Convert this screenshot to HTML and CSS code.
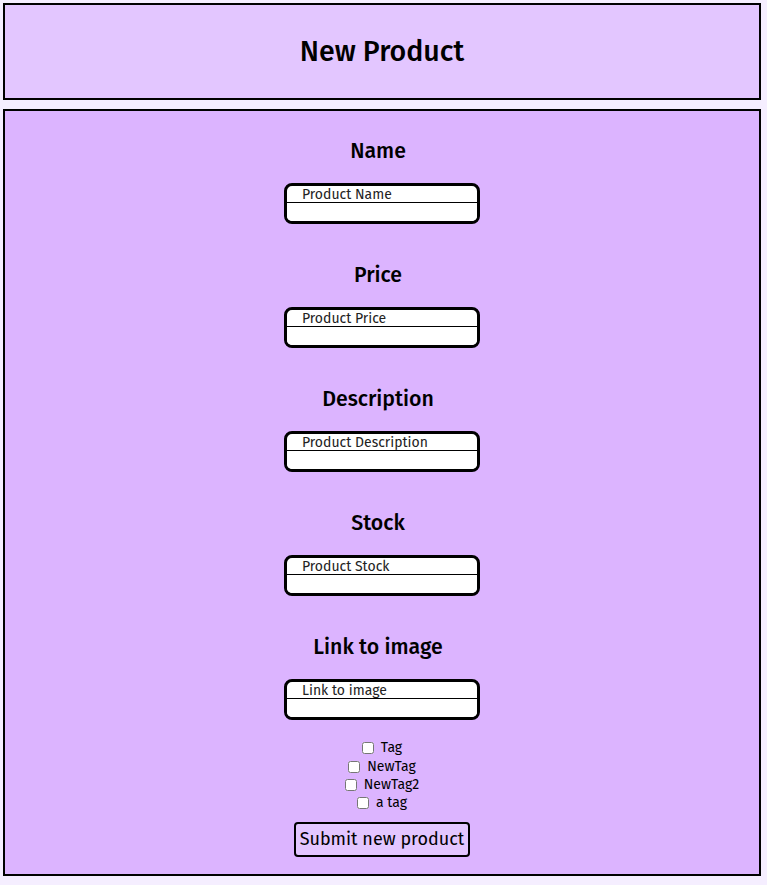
FILE: index.html
```html
<!DOCTYPE html>
<html lang="en">
<head>
<meta charset="utf-8">
<title>New Product</title>
<link rel="stylesheet" href="styles.css">
</head>
<body>
<header class="top">
  <h1 class="title">New Product</h1>
</header>
<main class="panel">
  <form class="form">
    <div class="group">
      <h3 class="label">Name</h3>
      <div class="field"><span class="hint">Product Name</span><input class="entry" type="text"></div>
    </div>
    <div class="group">
      <h3 class="label">Price</h3>
      <div class="field"><span class="hint">Product Price</span><input class="entry" type="text"></div>
    </div>
    <div class="group">
      <h3 class="label">Description</h3>
      <div class="field"><span class="hint">Product Description</span><input class="entry" type="text"></div>
    </div>
    <div class="group">
      <h3 class="label">Stock</h3>
      <div class="field"><span class="hint">Product Stock</span><input class="entry" type="text"></div>
    </div>
    <div class="group">
      <h3 class="label">Link to image</h3>
      <div class="field"><span class="hint">Link to image</span><input class="entry" type="text"></div>
    </div>
    <div class="tags">
      <label class="tag"><input type="checkbox" class="box"><span>Tag</span></label>
      <label class="tag"><input type="checkbox" class="box"><span>NewTag</span></label>
      <label class="tag"><input type="checkbox" class="box"><span>NewTag2</span></label>
      <label class="tag"><input type="checkbox" class="box"><span>a tag</span></label>
    </div>
    <button type="button" class="submit">Submit new product</button>
  </form>
</main>
</body>
</html>
```

FILE: styles.css
```css
* { box-sizing: border-box; }
html, body { background: #f5eeff; }
body {
  margin: 3px 6px 0 3px;
  font-family: "Fira Sans", "Open Sans", "Noto Sans", sans-serif;
  color: #000;
}
.top {
  height: 97px;
  background: #e3c6ff;
  border: 2px solid #000;
  display: flex;
  align-items: center;
  justify-content: center;
  margin-bottom: 9px;
}
.title {
  margin: 0;
  font-size: 28.6px;
  font-weight: 500;
  line-height: 34px;
}
.panel {
  height: 767px;
  background: #dcb4ff;
  border: 2px solid #000;
}
.form {
  display: flex;
  flex-direction: column;
  align-items: center;
  padding-top: 28px;
}
.group {
  display: flex;
  flex-direction: column;
  align-items: center;
  gap: 20px;
  margin-bottom: 39px;
}
.group:nth-child(5) { margin-bottom: 19px; }
.label {
  margin: 0 8px 0 0;
  font-size: 21.3px;
  line-height: 24px;
  font-weight: 500;
}
.field {
  width: 196px;
  height: 41px;
  border: 3px solid #000;
  border-radius: 8px;
  background: #fff;
  display: flex;
  flex-direction: column;
  overflow: hidden;
}
.hint {
  height: 17px;
  border-bottom: 1px solid #000;
  padding-left: 15px;
  padding-top: 1px;
  font-size: 14px;
  line-height: 15px;
  color: #222;
}
.entry {
  flex: 1;
  border: 0;
  margin: 0;
  padding: 0;
  background: #fff;
  outline: none;
}
.tags {
  display: flex;
  flex-direction: column;
  align-items: center;
}
.tag {
  height: 18.4px;
  display: flex;
  align-items: center;
  font-size: 14px;
  line-height: 18px;
}
.box {
  width: 12px;
  height: 12px;
  margin: 0 7px 0 0;
}
.submit {
  margin-top: 9px;
  width: 176px;
  height: 35px;
  background: #e3c6ff;
  border: 2px solid #000;
  border-radius: 4px;
  font-family: inherit;
  font-size: 18px;
  color: #000;
  padding: 0;
}
```
